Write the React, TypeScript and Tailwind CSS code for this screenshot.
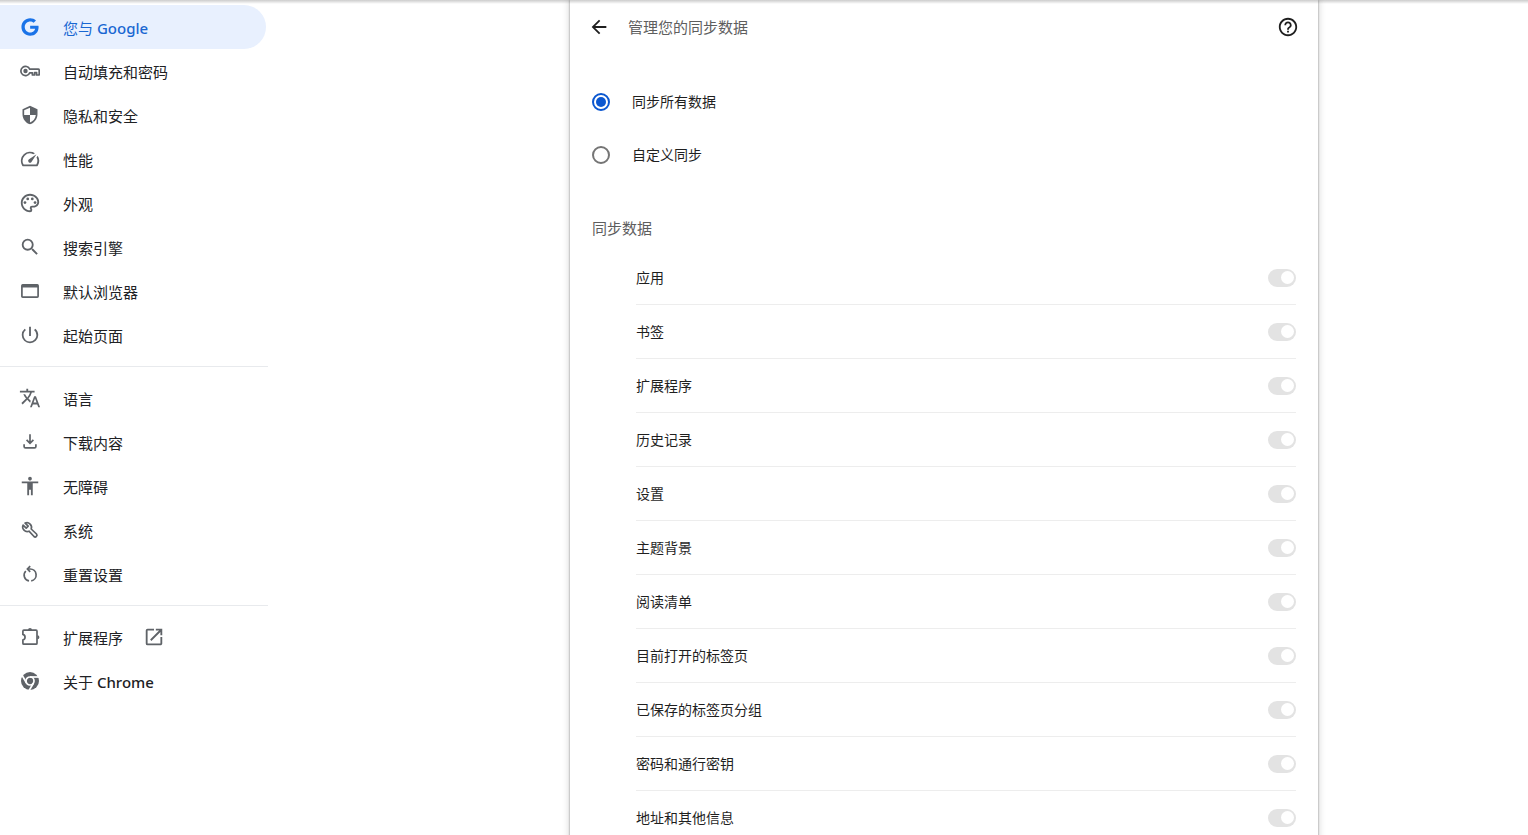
import { useState } from "react";
import type { ReactNode } from "react";
import {
  MdAccessibility,
  MdArrowBack,
  MdHelpOutline,
  MdOpenInNew,
  MdOutlinePalette,
  MdOutlineSpeed,
  MdPowerSettingsNew,
  MdSearch,
  MdSecurity,
  MdTranslate,
} from "react-icons/md";
import { FaGoogle } from "react-icons/fa";

// ── Custom icons ─────────────────────────────────────────────────────────────
function OutlineIcon({ children }: { children: ReactNode }) {
  return (
    <svg viewBox="0 0 20 20" className="size-5 shrink-0" fill="none" stroke="currentColor" strokeWidth="1.7">
      {children}
    </svg>
  );
}

const KeyIcon = () => (
  <OutlineIcon>
    <path d="M9.7 8.2H18.2Q19.2 8.2 19.2 9.2V14H16.6V11.6H14.6V14H12.4V11.8H9.7A4.6 4.6 0 1 1 9.7 8.2Z" strokeLinejoin="round" />
    <circle cx="5.5" cy="10" r="2.2" fill="currentColor" stroke="none" />
  </OutlineIcon>
);

const WindowIcon = () => (
  <OutlineIcon>
    <rect x="1.9" y="3.9" width="16.2" height="12.2" rx="0.8" />
    <path d="M1.9 5.2H18.1" strokeWidth="2.6" />
  </OutlineIcon>
);

const DownloadIcon = () => (
  <OutlineIcon>
    <path d="M10 2.2V11M6.6 7.9L10 11.3L13.4 7.9" />
    <path d="M4.1 12.2V14.4Q4.1 15.8 5.5 15.8H14.5Q15.9 15.8 15.9 14.4V12.2" />
  </OutlineIcon>
);

const WrenchIcon = () => (
  <OutlineIcon>
    <path
      d="M5.1 3.1L8.2 6.2L6.2 8.2L3.1 5.1A4.6 4.6 0 0 0 9 11.2L14 16.5Q15.2 17.6 16.4 16.4Q17.6 15.2 16.5 14L11.2 9A4.6 4.6 0 0 0 5.1 3.1Z"
      strokeLinejoin="round"
    />
  </OutlineIcon>
);

const ResetIcon = () => (
  <OutlineIcon>
    <path d="M9 16.9A5.9 5.9 0 0 1 5.8 7M11.2 16.9A6 6 0 0 0 10 5H8" />
    <path d="M10.2 2.2L7.4 5L10.2 7.8" />
  </OutlineIcon>
);

const PuzzleIcon = () => (
  <OutlineIcon>
    <path d="M2.9 7.4V4.2Q2.9 3.2 3.9 3.2H16Q17 3.2 17 4.2V16.2Q17 17.2 16 17.2H3.9Q2.9 17.2 2.9 16.2V13A2.9 2.9 0 0 0 2.9 7.4Z" />
    <path d="M8 3A2 2 0 0 1 12 3ZM17.4 8.2A2 2 0 0 1 17.4 12.2Z" fill="currentColor" stroke="none" />
  </OutlineIcon>
);

const ChromeIcon = () => (
  <svg viewBox="0 0 20 20" className="size-5 shrink-0" fill="none">
    <circle cx="10" cy="10" r="9" fill="#5f6368" />
    <circle cx="10" cy="10" r="4" stroke="#fff" strokeWidth="1.7" />
    <g stroke="#fff" strokeWidth="1.7">
      <path d="M10 6H19" />
      <path d="M10 6H19" transform="rotate(120 10 10)" />
      <path d="M10 6H19" transform="rotate(240 10 10)" />
    </g>
  </svg>
);

// ── Menu data ────────────────────────────────────────────────────────────────
type MenuItem = { label: string; latin?: string; icon: ReactNode; external?: boolean };

const MENU: MenuItem[][] = [
  [
    { label: "您与", latin: "Google", icon: <FaGoogle className="size-[18px] shrink-0 text-[#1a73e8]" /> },
    { label: "自动填充和密码", icon: <KeyIcon /> },
    { label: "隐私和安全", icon: <MdSecurity className="size-5 shrink-0" /> },
    { label: "性能", icon: <MdOutlineSpeed className="size-[22px] shrink-0" /> },
    { label: "外观", icon: <MdOutlinePalette className="size-[22px] shrink-0" /> },
    { label: "搜索引擎", icon: <MdSearch className="size-[22px] shrink-0" /> },
    { label: "默认浏览器", icon: <WindowIcon /> },
    { label: "起始页面", icon: <MdPowerSettingsNew className="size-[22px] shrink-0" /> },
  ],
  [
    { label: "语言", icon: <MdTranslate className="size-[22px] shrink-0" /> },
    { label: "下载内容", icon: <DownloadIcon /> },
    { label: "无障碍", icon: <MdAccessibility className="size-[22px] shrink-0" /> },
    { label: "系统", icon: <WrenchIcon /> },
    { label: "重置设置", icon: <ResetIcon /> },
  ],
  [
    { label: "扩展程序", icon: <PuzzleIcon />, external: true },
    { label: "关于", latin: "Chrome", icon: <ChromeIcon /> },
  ],
];

const SYNC_TYPES = [
  "应用",
  "书签",
  "扩展程序",
  "历史记录",
  "设置",
  "主题背景",
  "阅读清单",
  "目前打开的标签页",
  "已保存的标签页分组",
  "密码和通行密钥",
  "地址和其他信息",
];

// ── Sidebar ──────────────────────────────────────────────────────────────────
function MenuLink({ item, active }: { item: MenuItem; active: boolean }) {
  return (
    <a
      href="#"
      aria-current={active ? "page" : undefined}
      className={`mr-0.5 flex h-11 items-center rounded-r-full pl-5 text-[15px] ${
        active ? "bg-[#e8f0fe] text-[#1967d2]" : "text-[#202124]"
      }`}
    >
      <span className="mr-[23px] flex w-5 justify-center text-[#5f6368]">{item.icon}</span>
      <span className="pt-0.5">
        {item.label}
        {item.latin && <span className="font-medium"> {item.latin}</span>}
      </span>
      {item.external && <MdOpenInNew className="ml-5 size-[22px] text-[#5f6368]" />}
    </a>
  );
}

function Sidebar() {
  return (
    <nav className="w-[268px] shrink-0 pt-[5px]">
      {MENU.map((group, g) => (
        <div key={g} className={g > 0 ? "mt-[9px] border-t border-[#e8eaed] pt-[9px]" : ""}>
          {group.map((item, i) => (
            <MenuLink key={item.label} item={item} active={g === 0 && i === 0} />
          ))}
        </div>
      ))}
    </nav>
  );
}

// ── Sync page ────────────────────────────────────────────────────────────────
function RadioRow({ label, checked, onChange }: { label: string; checked: boolean; onChange: () => void }) {
  return (
    <label className="flex h-[53px] items-center gap-[22px] text-sm">
      <input
        type="radio"
        name="sync-mode"
        checked={checked}
        onChange={onChange}
        className="size-[18px] appearance-none rounded-full border-2 border-[#757575] bg-clip-content p-[2px] checked:border-[#0b57d0] checked:bg-[#0b57d0]"
      />
      {label}
    </label>
  );
}

function ToggleRow({ label }: { label: string }) {
  return (
    <label className="flex h-[54px] items-center justify-between border-b border-[#ededed] text-sm">
      {label}
      <input
        type="checkbox"
        role="switch"
        defaultChecked
        disabled
        className="flex h-[18px] w-7 appearance-none items-center justify-end rounded-full bg-[#e3e3e3] pr-0.5 after:size-[13px] after:rounded-full after:bg-white"
      />
    </label>
  );
}

export default function App() {
  const [syncAll, setSyncAll] = useState(true);

  return (
    <div className="relative flex h-screen overflow-hidden bg-white font-['Noto_Sans','Noto_Sans_CJK_SC',sans-serif] text-[#1f1f1f]">
      {/* Toolbar shadow */}
      <div className="pointer-events-none absolute inset-x-0 top-0 z-10 h-1 bg-linear-to-b from-black/20 to-transparent" />
      <Sidebar />
      <main className="flex min-w-0 flex-1 justify-center pl-[92px]">
        <section className="h-max min-h-full w-full max-w-[748px] bg-white shadow-[0_0_2px_rgba(0,0,0,0.4),0_0_6px_2px_rgba(0,0,0,0.12)]">
          <header className="flex h-[54px] items-center pr-[19px] pl-[18px]">
            <button type="button" aria-label="返回" className="mr-[18px]">
              <MdArrowBack className="size-[22px]" />
            </button>
            <h1 className="flex-1 text-[15px] text-[#5e5e5e]">管理您的同步数据</h1>
            <button type="button" aria-label="帮助">
              <MdHelpOutline className="size-[22px]" />
            </button>
          </header>
          <div className="px-[22px] pt-[21px]">
            <RadioRow label="同步所有数据" checked={syncAll} onChange={() => setSyncAll(true)} />
            <RadioRow label="自定义同步" checked={!syncAll} onChange={() => setSyncAll(false)} />
            <h2 className="flex h-[70px] items-end pb-3 text-[15px] text-[#5e5e5e]">同步数据</h2>
            <div className="pl-11">
              {SYNC_TYPES.map((label) => (
                <ToggleRow key={label} label={label} />
              ))}
            </div>
          </div>
        </section>
      </main>
    </div>
  );
}
